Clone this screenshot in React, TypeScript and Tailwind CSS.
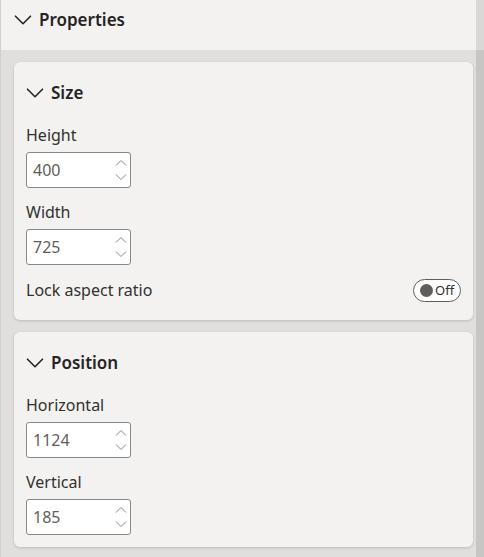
import React from 'react';

function Chevron() {
  return (
    <svg viewBox="0 0 18 10" className="h-[10px] w-[18px]" fill="none" stroke="currentColor" strokeWidth={1.6}>
      <path d="M1.5 1.2 9 8.7l7.5-7.5" strokeLinecap="round" strokeLinejoin="round" />
    </svg>
  );
}

function NumberInput({ value }: { value: string }) {
  return (
    <div className="flex h-[36px] w-[105px] items-center justify-between rounded-[3px] border border-[#8a8886] bg-white pl-[6px] pr-[3px]">
      <span className="text-[16px] text-[#605e5c]">{value}</span>
      <div className="flex flex-col items-center gap-[8px] text-[#8a8886]">
        <svg viewBox="0 0 12 7" className="h-[7px] w-[12px]" fill="none" stroke="currentColor" strokeWidth={1}>
          <path d="M1 6.5 6 1.5l5 5" />
        </svg>
        <svg viewBox="0 0 12 7" className="h-[7px] w-[12px]" fill="none" stroke="currentColor" strokeWidth={1}>
          <path d="M1 0.5 6 5.5l5-5" />
        </svg>
      </div>
    </div>
  );
}

function Field({ label, value }: { label: string; value: string }) {
  return (
    <div className="flex flex-col">
      <span className="mb-[6px] text-[16px] leading-[22px] text-[#323130]">{label}</span>
      <NumberInput value={value} />
    </div>
  );
}

function Card({ title, children }: { title: string; children: React.ReactNode }) {
  return (
    <section className="rounded-[6px] bg-[#f3f2f1] px-[12px] pb-[12px] pt-[20px] shadow-[0_1px_3px_rgba(0,0,0,0.16)]">
      <div className="mb-[20px] flex items-center gap-[7px] text-[#252423]">
        <Chevron />
        <span className="text-[17px] font-semibold leading-[22px]">{title}</span>
      </div>
      <div className="flex flex-col gap-[13px]">{children}</div>
    </section>
  );
}

export default function App() {
  return (
    <div className="flex h-[557px] w-[484px] overflow-hidden bg-[#e1dfdd] font-['Noto_Sans',sans-serif]">
      <div className="flex flex-1 flex-col border-l border-[#d2d0ce]">
        <header className="flex h-[50px] items-start gap-[7px] bg-[#f3f2f1] pl-[13px] pt-[9px] text-[#252423]">
          <div className="flex h-[22px] items-center">
            <Chevron />
          </div>
          <span className="text-[17px] font-semibold leading-[22px]">Properties</span>
        </header>
        <div className="flex flex-col gap-[12px] pl-[13px] pr-[3px] pt-[12px]">
          <Card title="Size">
            <Field label="Height" value="400" />
            <Field label="Width" value="725" />
            <div className="flex items-center justify-between pb-[6px]">
              <span className="text-[16px] text-[#323130]">Lock aspect ratio</span>
              <div className="flex h-[23px] w-[48px] items-center gap-[2px] rounded-full border border-[#605e5c] bg-white pl-[6px]">
                <span className="h-[13px] w-[13px] rounded-full bg-[#605e5c]" />
                <span className="text-[13px] leading-none text-[#323130]">Off</span>
              </div>
            </div>
          </Card>
          <Card title="Position">
            <Field label="Horizontal" value="1124" />
            <Field label="Vertical" value="185" />
          </Card>
        </div>
      </div>
      <div className="flex w-[8px] flex-col bg-[#c8c6c4]">
        <div className="h-[50px] bg-[#dad8d6]" />
      </div>
    </div>
  );
}
